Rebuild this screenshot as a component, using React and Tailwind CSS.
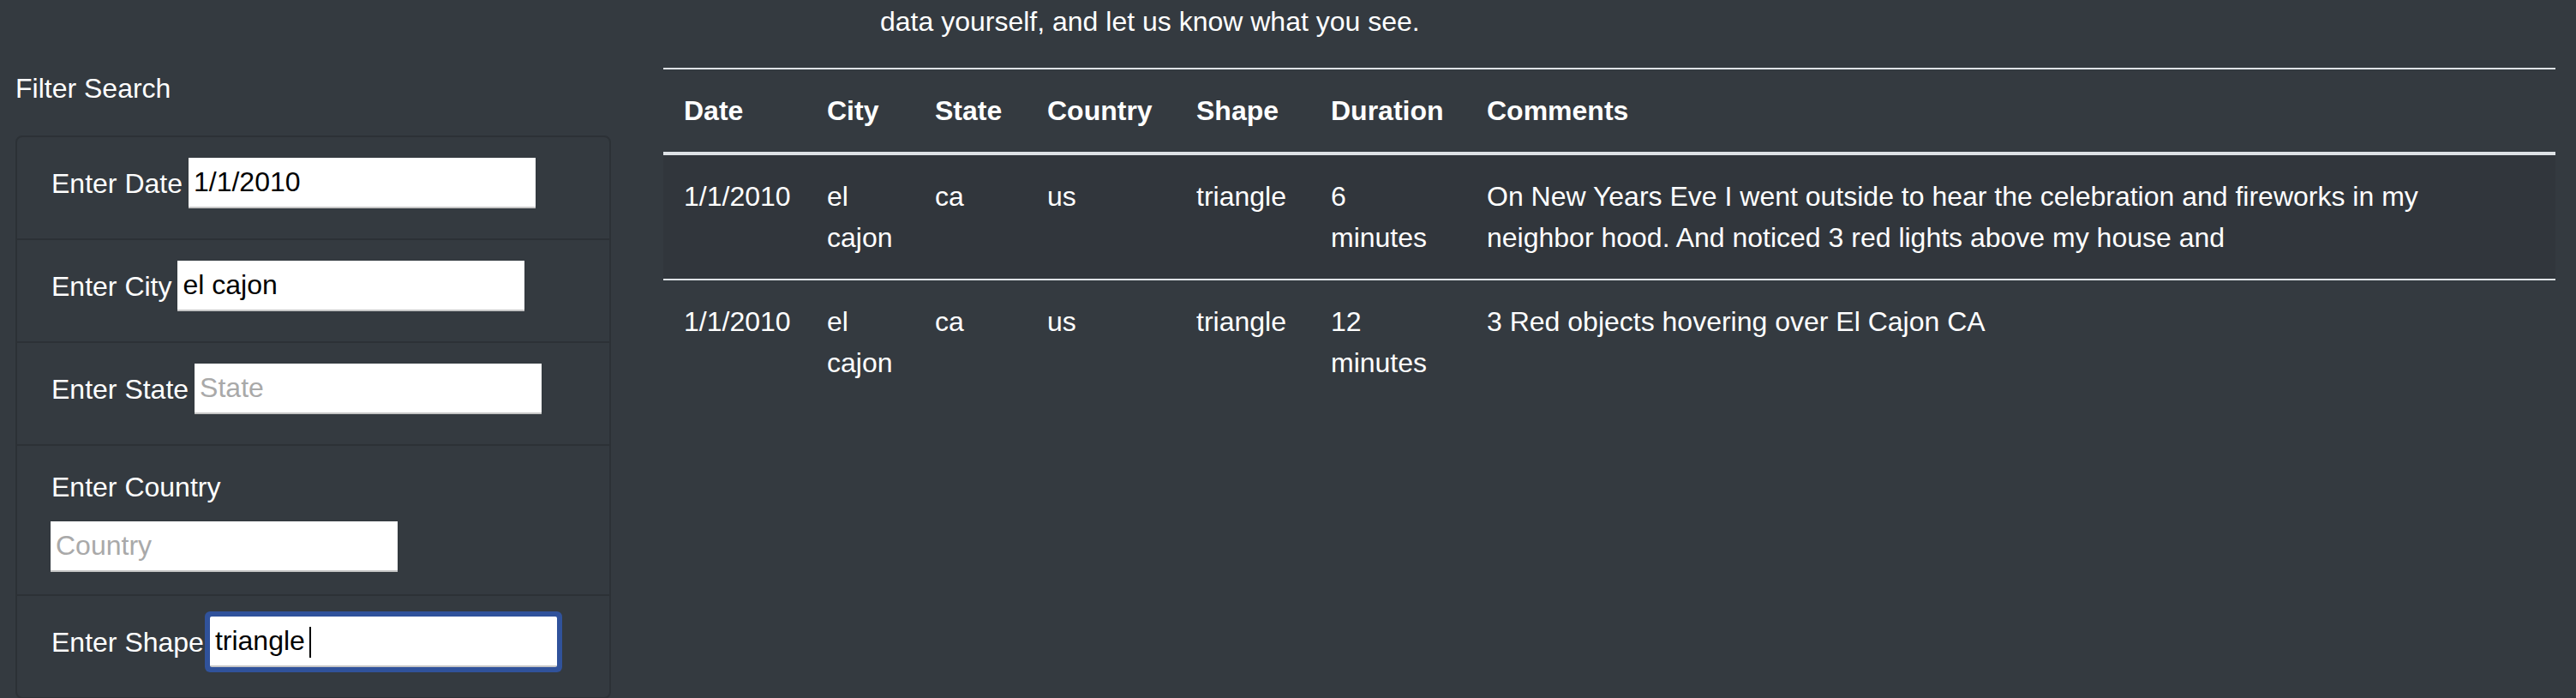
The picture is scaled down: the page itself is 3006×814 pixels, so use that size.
const rows = [
  {
    date: "1/1/2010",
    city: "el cajon",
    state: "ca",
    country: "us",
    shape: "triangle",
    duration: "6 minutes",
    comments: (
      <>
        On New Years Eve I went outside to hear the celebration and fireworks in my
        <br />
        neighbor hood. And noticed 3 red lights above my house and
      </>
    ),
  },
  {
    date: "1/1/2010",
    city: "el cajon",
    state: "ca",
    country: "us",
    shape: "triangle",
    duration: "12 minutes",
    comments: "3 Red objects hovering over El Cajon CA",
  },
];

const inputClass =
  "h-[59px] w-[405px] bg-white text-black text-[32px] px-[6px] border-0 border-b-2 border-[#c6c6c6] outline-none placeholder:text-[#a9a9a9]";

const FilterItem = ({ label, placeholder, value, focused, last }) => {
  return (
    <li
      className={
        "flex items-center gap-[7px] pl-10 pt-6 pb-[35px] " +
        (last ? "" : "border-b-2 border-[#2c3136]")
      }
    >
      <label className="leading-[48px]">{label}</label>
      {focused ? (
        <div className="relative">
          <input
            className={inputClass + " rounded-[2px] ring-[6px] ring-[#30529b]"}
            defaultValue={value}
            placeholder={placeholder}
          />
          <span className="absolute left-[116px] top-[12px] h-[36px] w-[2px] bg-black" />
        </div>
      ) : (
        <input className={inputClass} defaultValue={value} placeholder={placeholder} />
      )}
    </li>
  );
};

export default function App() {
  return (
    <div
      className="flex h-[814px] w-full overflow-hidden bg-[#343a40] text-white text-[32px] leading-[48px]"
      style={{ fontFamily: '"Liberation Sans", Arial, sans-serif' }}
    >
      {/* filters */}
      <div className="w-[713px] shrink-0 pl-[18px] pt-[79px]">
        <h5 className="leading-[48px]">Filter Search</h5>
        <ul className="mt-[31px] rounded-lg border-2 border-[#2c3136]">
          <FilterItem label="Enter Date" value="1/1/2010" />
          <FilterItem label="Enter City" value="el cajon" />
          <FilterItem label="Enter State" placeholder="State" />
          <li className="pl-10 pt-6 pb-[26px] border-b-2 border-[#2c3136]">
            <label className="block leading-[48px]">Enter Country</label>
            <input className={inputClass + " mt-4 -ml-[1px]"} placeholder="Country" />
          </li>
          <FilterItem label="Enter Shape" value="triangle" focused last />
        </ul>
      </div>

      {/* results */}
      <div className="flex-1 pl-[61px] pr-6">
        <p className="mt-[1px] pl-[253px] leading-[48px]">
          data yourself, and let us know what you see.
        </p>
        <table className="mt-[30px] w-[2208px] table-fixed border-collapse text-left">
          <colgroup>
            <col className="w-[167px]" />
            <col className="w-[126px]" />
            <col className="w-[131px]" />
            <col className="w-[174px]" />
            <col className="w-[157px]" />
            <col className="w-[182px]" />
            <col />
          </colgroup>
          <thead>
            <tr>
              {["Date", "City", "State", "Country", "Shape", "Duration", "Comments"].map((h) => (
                <th
                  key={h}
                  className="border-t-2 border-b-4 border-[#dee2e6] p-6 align-bottom font-bold"
                >
                  {h}
                </th>
              ))}
            </tr>
          </thead>
          <tbody>
            {rows.map((r, i) => (
              <tr key={i} className={i % 2 === 0 ? "bg-[#31363c]" : ""}>
                <td className={"p-6 align-top whitespace-nowrap " + (i > 0 ? "border-t-2 border-[#dee2e6]" : "")}>
                  {r.date}
                </td>
                <td className={"p-6 align-top " + (i > 0 ? "border-t-2 border-[#dee2e6]" : "")}>{r.city}</td>
                <td className={"p-6 align-top " + (i > 0 ? "border-t-2 border-[#dee2e6]" : "")}>{r.state}</td>
                <td className={"p-6 align-top " + (i > 0 ? "border-t-2 border-[#dee2e6]" : "")}>{r.country}</td>
                <td className={"p-6 align-top " + (i > 0 ? "border-t-2 border-[#dee2e6]" : "")}>{r.shape}</td>
                <td className={"p-6 align-top " + (i > 0 ? "border-t-2 border-[#dee2e6]" : "")}>{r.duration}</td>
                <td className={"p-6 align-top " + (i > 0 ? "border-t-2 border-[#dee2e6]" : "")}>{r.comments}</td>
              </tr>
            ))}
          </tbody>
        </table>
      </div>
    </div>
  );
}
